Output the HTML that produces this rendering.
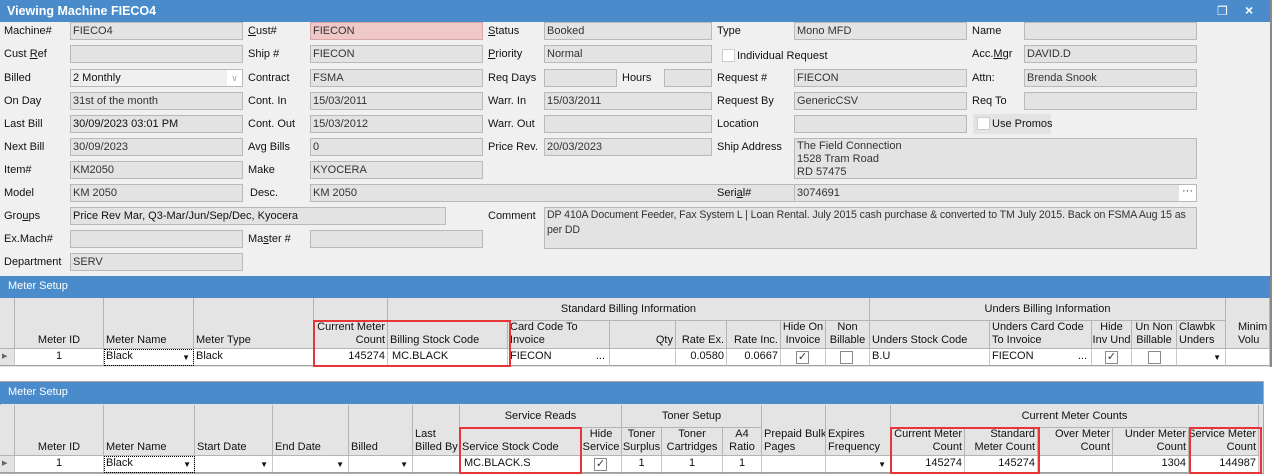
<!DOCTYPE html>
<html><head><meta charset="utf-8"><style>
*{box-sizing:border-box;margin:0;padding:0}
body{width:1276px;height:474px;background:#fff;font-family:"Liberation Sans",sans-serif;font-size:11px;color:#111;position:relative;overflow:hidden}
.a{position:absolute}
#win{position:absolute;left:0;top:0;width:1272px;height:367px;background:#f0f0f0;border-right:2px solid #888}
.tb{position:absolute;left:0;top:0;width:1270px;height:22px;background:#4a8ccb;color:#fff;font-weight:bold;font-size:12.5px;padding:4px 0 0 7px}
.l{position:absolute;height:18px;line-height:18px;white-space:nowrap}
.f{position:absolute;height:18px;line-height:16px;background:#e3e3e3;border:1px solid #b9b9b9;padding-left:2px;color:#333;white-space:nowrap;overflow:hidden}
.bar{position:absolute;left:0;height:22px;background:#4a8ccb;color:#fff;padding:4px 0 0 8px;font-size:11px}
.h{position:absolute;background:#e4e4e4;border-right:1px solid #b4b4b4;border-bottom:1px solid #b4b4b4;line-height:13px;padding:0 2px 1px 2px;display:flex;align-items:flex-end;overflow:hidden;white-space:nowrap}
.g{position:absolute;background:#e4e4e4;border-right:1px solid #b4b4b4;border-bottom:1px solid #b4b4b4;text-align:center;line-height:22px}
.c{position:absolute;background:#fff;border-right:1px solid #c8c8c8;border-bottom:1px solid #a0a0a0;line-height:15px;padding:0 2px;white-space:nowrap;overflow:hidden}
.r{justify-content:flex-end;text-align:right}
.ce{justify-content:center;text-align:center}
.red{position:absolute;border:2px solid #e8353a}
.cb{position:absolute;width:13px;height:13px;border:1px solid #8a8a8a;background:#fff;font-size:11px;line-height:11px;text-align:center;color:#333}
.dd{position:absolute;font-size:8px}
</style></head><body>
<div id="win">
<div class="tb">Viewing Machine FIECO4</div>
<div class="a" style="left:1217px;top:4px;color:#fff;font-size:12px">&#x2750;</div>
<div class="a" style="left:1245px;top:2px;color:#fff;font-size:14px;font-weight:bold">×</div>

<div class="l" style="left:4px;top:22px">Machine#</div><div class="f" style="left:70px;top:22px;width:173px">FIECO4</div>
<div class="l" style="left:4px;top:45px">Cust <u>R</u>ef</div><div class="f" style="left:70px;top:45px;width:173px"></div>
<div class="l" style="left:4px;top:69px">Billed</div><div class="f" style="left:70px;top:69px;width:173px;background:#f0f0f0;color:#111">2 Monthly<span style="position:absolute;right:0;top:0;width:15px;height:16px;background:#fff;color:#aaa;font-size:9px;text-align:center">&#x2228;</span></div>
<div class="l" style="left:4px;top:92px">On Day</div><div class="f" style="left:70px;top:92px;width:173px">31st of the month</div>
<div class="l" style="left:4px;top:115px">Last Bill</div><div class="f" style="left:70px;top:115px;width:173px;color:#111">30/09/2023 03:01 PM</div>
<div class="l" style="left:4px;top:138px">Next Bill</div><div class="f" style="left:70px;top:138px;width:173px">30/09/2023</div>
<div class="l" style="left:4px;top:161px">Item#</div><div class="f" style="left:70px;top:161px;width:173px">KM2050</div>
<div class="l" style="left:4px;top:184px">Model</div><div class="f" style="left:70px;top:184px;width:173px">KM 2050</div>
<div class="l" style="left:4px;top:207px">Gro<u>u</u>ps</div><div class="f" style="left:70px;top:207px;width:376px;color:#111">Price Rev Mar, Q3-Mar/Jun/Sep/Dec, Kyocera</div>
<div class="l" style="left:4px;top:230px">Ex.Mach#</div><div class="f" style="left:70px;top:230px;width:173px"></div>
<div class="l" style="left:4px;top:253px">Department</div><div class="f" style="left:70px;top:253px;width:173px">SERV</div>

<div class="l" style="left:248px;top:22px"><u>C</u>ust#</div><div class="f" style="left:310px;top:22px;width:173px;background:#f0c8c8;border-color:#d8a8a8">FIECON</div>
<div class="l" style="left:248px;top:45px">Ship #</div><div class="f" style="left:310px;top:45px;width:173px">FIECON</div>
<div class="l" style="left:248px;top:69px">Contract</div><div class="f" style="left:310px;top:69px;width:173px">FSMA</div>
<div class="l" style="left:248px;top:92px">Cont. In</div><div class="f" style="left:310px;top:92px;width:173px">15/03/2011</div>
<div class="l" style="left:248px;top:115px">Cont. Out</div><div class="f" style="left:310px;top:115px;width:173px">15/03/2012</div>
<div class="l" style="left:248px;top:138px">Avg Bills</div><div class="f" style="left:310px;top:138px;width:173px">0</div>
<div class="l" style="left:248px;top:161px">Make</div><div class="f" style="left:310px;top:161px;width:173px">KYOCERA</div>
<div class="l" style="left:250px;top:184px">Desc.</div><div class="f" style="left:310px;top:184px;width:657px">KM 2050</div>
<div class="l" style="left:248px;top:230px">Ma<u>s</u>ter #</div><div class="f" style="left:310px;top:230px;width:173px"></div>

<div class="l" style="left:488px;top:22px"><u>S</u>tatus</div><div class="f" style="left:544px;top:22px;width:168px">Booked</div>
<div class="l" style="left:488px;top:45px"><u>P</u>riority</div><div class="f" style="left:544px;top:45px;width:168px">Normal</div>
<div class="l" style="left:488px;top:69px">Req Days</div><div class="f" style="left:544px;top:69px;width:73px"></div>
<div class="l" style="left:622px;top:69px">Hours</div><div class="f" style="left:664px;top:69px;width:48px"></div>
<div class="l" style="left:488px;top:92px">Warr. In</div><div class="f" style="left:544px;top:92px;width:168px">15/03/2011</div>
<div class="l" style="left:488px;top:115px">Warr. Out</div><div class="f" style="left:544px;top:115px;width:168px"></div>
<div class="l" style="left:488px;top:138px">Price Rev.</div><div class="f" style="left:544px;top:138px;width:168px">20/03/2023</div>
<div class="l" style="left:488px;top:207px">Comment</div><div class="f" style="left:544px;top:207px;width:653px;height:42px;white-space:normal;line-height:15px;font-size:10.6px;letter-spacing:-0.1px">DP 410A Document Feeder, Fax System L | Loan Rental. July 2015 cash purchase &amp; converted to TM July 2015. Back on FSMA Aug 15 as per DD</div>

<div class="l" style="left:717px;top:22px">Type</div><div class="f" style="left:794px;top:22px;width:173px">Mono MFD</div>
<div class="cb" style="left:722px;top:49px;border-color:#ccc"></div><div class="l" style="left:737px;top:47px">Individual Request</div>
<div class="l" style="left:717px;top:69px">Request #</div><div class="f" style="left:794px;top:69px;width:173px">FIECON</div>
<div class="l" style="left:717px;top:92px">Request By</div><div class="f" style="left:794px;top:92px;width:173px">GenericCSV</div>
<div class="l" style="left:717px;top:115px">Location</div><div class="f" style="left:794px;top:115px;width:173px"></div>
<div class="l" style="left:717px;top:138px">Ship Address</div><div class="f" style="left:794px;top:138px;width:403px;height:41px;white-space:normal;line-height:13px;padding-top:1px">The Field Connection<br>1528 Tram Road<br>RD 57475</div>
<div class="l" style="left:717px;top:184px">Seri<u>a</u>l#</div><div class="f" style="left:794px;top:184px;width:403px">3074691<span style="position:absolute;right:0;top:0;width:17px;height:16px;background:#fff;text-align:center;line-height:12px">···</span></div>

<div class="l" style="left:972px;top:22px">Name</div><div class="f" style="left:1024px;top:22px;width:173px"></div>
<div class="l" style="left:972px;top:45px">Acc.<u>M</u>gr</div><div class="f" style="left:1024px;top:45px;width:173px">DAVID.D</div>
<div class="l" style="left:972px;top:69px">Attn:</div><div class="f" style="left:1024px;top:69px;width:173px">Brenda Snook</div>
<div class="l" style="left:972px;top:92px">Req To</div><div class="f" style="left:1024px;top:92px;width:173px"></div>
<div class="a" style="left:973px;top:114px;width:78px;height:20px;background:#e3e3e3"></div>
<div class="cb" style="left:977px;top:117px;border-color:#ccc"></div><div class="l" style="left:992px;top:115px">Use Promos</div>

<div class="bar" style="top:276px;width:1270px">Meter Setup</div>
<div class="a" style="left:0;top:298px;width:1270px;height:69px;background:#e4e4e4"></div>
<div class="h" style="left:0;top:298px;width:15px;height:51px"></div>
<div class="h ce" style="left:15px;top:298px;width:89px;height:51px">Meter ID</div>
<div class="h" style="left:104px;top:298px;width:90px;height:51px">Meter Name</div>
<div class="h" style="left:194px;top:298px;width:120px;height:51px">Meter Type</div>
<div class="h r" style="left:314px;top:298px;width:74px;height:51px"><span>Current Meter<br>Count</span></div>
<div class="g" style="left:388px;top:298px;width:482px;height:23px">Standard Billing Information</div>
<div class="h" style="left:388px;top:321px;width:120px;height:28px">Billing Stock Code</div>
<div class="h" style="left:508px;top:321px;width:102px;height:28px"><span>Card Code To<br>Invoice</span></div>
<div class="h r" style="left:610px;top:321px;width:66px;height:28px">Qty</div>
<div class="h r" style="left:676px;top:321px;width:51px;height:28px">Rate Ex.</div>
<div class="h r" style="left:727px;top:321px;width:54px;height:28px">Rate Inc.</div>
<div class="h ce" style="left:781px;top:321px;width:45px;height:28px;padding:0 0 1px"><span>Hide On<br>Invoice</span></div>
<div class="h ce" style="left:826px;top:321px;width:44px;height:28px;padding:0 0 1px"><span>Non<br>Billable</span></div>
<div class="g" style="left:870px;top:298px;width:356px;height:23px">Unders Billing Information</div>
<div class="h" style="left:870px;top:321px;width:120px;height:28px">Unders Stock Code</div>
<div class="h" style="left:990px;top:321px;width:102px;height:28px"><span>Unders Card Code<br>To Invoice</span></div>
<div class="h ce" style="left:1092px;top:321px;width:40px;height:28px;padding:0 0 1px"><span>Hide<br>Inv Und</span></div>
<div class="h ce" style="left:1132px;top:321px;width:45px;height:28px;padding:0 0 1px"><span>Un Non<br>Billable</span></div>
<div class="h" style="left:1177px;top:321px;width:49px;height:28px"><span>Clawbk<br>Unders</span></div>
<div class="h" style="left:1226px;top:298px;width:44px;height:51px;padding-left:12px"><span>Minim<br>Volu</span></div>

<div class="c" style="left:0;top:349px;width:15px;height:17px;background:#e4e4e4;font-size:7px;color:#666">▶</div>
<div class="c" style="left:15px;top:349px;width:89px;height:17px;text-align:center">1</div>
<div class="c" style="left:104px;top:349px;width:90px;height:17px;outline:1px dotted #000;outline-offset:-1px">Black<span class="dd" style="right:3px;top:1px">▼</span></div>
<div class="c" style="left:194px;top:349px;width:120px;height:17px">Black</div>
<div class="c" style="left:314px;top:349px;width:74px;height:17px;text-align:right">145274</div>
<div class="c" style="left:388px;top:349px;width:120px;height:17px;padding-left:4px">MC.BLACK</div>
<div class="c" style="left:508px;top:349px;width:102px;height:17px">FIECON<span class="a" style="right:4px;top:0">...</span></div>
<div class="c" style="left:610px;top:349px;width:66px;height:17px"></div>
<div class="c" style="left:676px;top:349px;width:51px;height:17px;text-align:right">0.0580</div>
<div class="c" style="left:727px;top:349px;width:54px;height:17px;text-align:right">0.0667</div>
<div class="c" style="left:781px;top:349px;width:45px;height:17px"></div><div class="cb" style="left:796px;top:351px">✓</div>
<div class="c" style="left:826px;top:349px;width:44px;height:17px"></div><div class="cb" style="left:840px;top:351px"></div>
<div class="c" style="left:870px;top:349px;width:120px;height:17px">B.U</div>
<div class="c" style="left:990px;top:349px;width:102px;height:17px">FIECON<span class="a" style="right:4px;top:0">...</span></div>
<div class="c" style="left:1092px;top:349px;width:40px;height:17px"></div><div class="cb" style="left:1105px;top:351px">✓</div>
<div class="c" style="left:1132px;top:349px;width:45px;height:17px"></div><div class="cb" style="left:1148px;top:351px"></div>
<div class="c" style="left:1177px;top:349px;width:49px;height:17px"><span class="dd" style="right:4px;top:1px">▼</span></div>
<div class="c" style="left:1226px;top:349px;width:44px;height:17px"></div>
<div class="red" style="left:313px;top:320px;width:198px;height:47px"></div>
</div>

<div class="a" style="left:0;top:381px;width:1264px;height:93px;background:#e4e4e4;border:1px solid #aaa"></div>
<div class="bar" style="top:382px;width:1263px">Meter Setup</div>
<div class="h" style="left:0;top:405px;width:15px;height:51px"></div>
<div class="h ce" style="left:15px;top:405px;width:89px;height:51px">Meter ID</div>
<div class="h" style="left:104px;top:405px;width:91px;height:51px">Meter Name</div>
<div class="h" style="left:195px;top:405px;width:78px;height:51px">Start Date</div>
<div class="h" style="left:273px;top:405px;width:76px;height:51px">End Date</div>
<div class="h" style="left:349px;top:405px;width:64px;height:51px">Billed</div>
<div class="h" style="left:413px;top:405px;width:47px;height:51px;padding:0 0 1px 2px"><span>Last<br>Billed By</span></div>
<div class="g" style="left:460px;top:405px;width:162px;height:23px">Service Reads</div>
<div class="h" style="left:460px;top:428px;width:121px;height:28px">Service Stock Code</div>
<div class="h ce" style="left:581px;top:428px;width:41px;height:28px;padding:0 0 1px"><span>Hide<br>Service</span></div>
<div class="g" style="left:622px;top:405px;width:140px;height:23px">Toner Setup</div>
<div class="h ce" style="left:622px;top:428px;width:40px;height:28px;padding:0 0 1px"><span>Toner<br>Surplus</span></div>
<div class="h ce" style="left:662px;top:428px;width:61px;height:28px"><span>Toner<br>Cartridges</span></div>
<div class="h ce" style="left:723px;top:428px;width:39px;height:28px"><span>A4<br>Ratio</span></div>
<div class="h" style="left:762px;top:405px;width:64px;height:51px;padding:0 0 1px 2px"><span>Prepaid Bulk<br>Pages</span></div>
<div class="h" style="left:826px;top:405px;width:65px;height:51px"><span>Expires<br>Frequency</span></div>
<div class="g" style="left:891px;top:405px;width:368px;height:23px">Current Meter Counts</div>
<div class="h r" style="left:891px;top:428px;width:74px;height:28px;padding:0 2px 1px 0"><span>Current Meter<br>Count</span></div>
<div class="h r" style="left:965px;top:428px;width:73px;height:28px;padding:0 2px 1px 0"><span>Standard<br>Meter Count</span></div>
<div class="h r" style="left:1038px;top:428px;width:75px;height:28px"><span>Over Meter<br>Count</span></div>
<div class="h r" style="left:1113px;top:428px;width:76px;height:28px"><span>Under Meter<br>Count</span></div>
<div class="h r" style="left:1189px;top:428px;width:70px;height:28px;padding:0 2px 1px 0"><span>Service Meter<br>Count</span></div>

<div class="c" style="left:0;top:456px;width:15px;height:17px;background:#e4e4e4;font-size:7px;color:#666">▶</div>
<div class="c" style="left:15px;top:456px;width:89px;height:17px;text-align:center">1</div>
<div class="c" style="left:104px;top:456px;width:91px;height:17px;outline:1px dotted #000;outline-offset:-1px">Black<span class="dd" style="right:3px;top:1px">▼</span></div>
<div class="c" style="left:195px;top:456px;width:78px;height:17px"><span class="dd" style="right:4px;top:1px">▼</span></div>
<div class="c" style="left:273px;top:456px;width:76px;height:17px"><span class="dd" style="right:4px;top:1px">▼</span></div>
<div class="c" style="left:349px;top:456px;width:64px;height:17px"><span class="dd" style="right:4px;top:1px">▼</span></div>
<div class="c" style="left:413px;top:456px;width:47px;height:17px"></div>
<div class="c" style="left:460px;top:456px;width:121px;height:17px;padding-left:4px">MC.BLACK.S</div>
<div class="c" style="left:581px;top:456px;width:41px;height:17px"></div><div class="cb" style="left:594px;top:458px">✓</div>
<div class="c" style="left:622px;top:456px;width:40px;height:17px;text-align:center">1</div>
<div class="c" style="left:662px;top:456px;width:61px;height:17px;text-align:center">1</div>
<div class="c" style="left:723px;top:456px;width:39px;height:17px;text-align:center">1</div>
<div class="c" style="left:762px;top:456px;width:64px;height:17px"></div>
<div class="c" style="left:826px;top:456px;width:65px;height:17px"><span class="dd" style="right:4px;top:1px">▼</span></div>
<div class="c" style="left:891px;top:456px;width:74px;height:17px;text-align:right">145274</div>
<div class="c" style="left:965px;top:456px;width:73px;height:17px;text-align:right">145274</div>
<div class="c" style="left:1038px;top:456px;width:75px;height:17px"></div>
<div class="c" style="left:1113px;top:456px;width:76px;height:17px;text-align:right">1304</div>
<div class="c" style="left:1189px;top:456px;width:70px;height:17px;text-align:right">144987</div>
<div class="red" style="left:459px;top:427px;width:123px;height:47px"></div>
<div class="red" style="left:890px;top:427px;width:150px;height:47px"></div>
<div class="red" style="left:1189px;top:427px;width:73px;height:47px"></div>
</body></html>
